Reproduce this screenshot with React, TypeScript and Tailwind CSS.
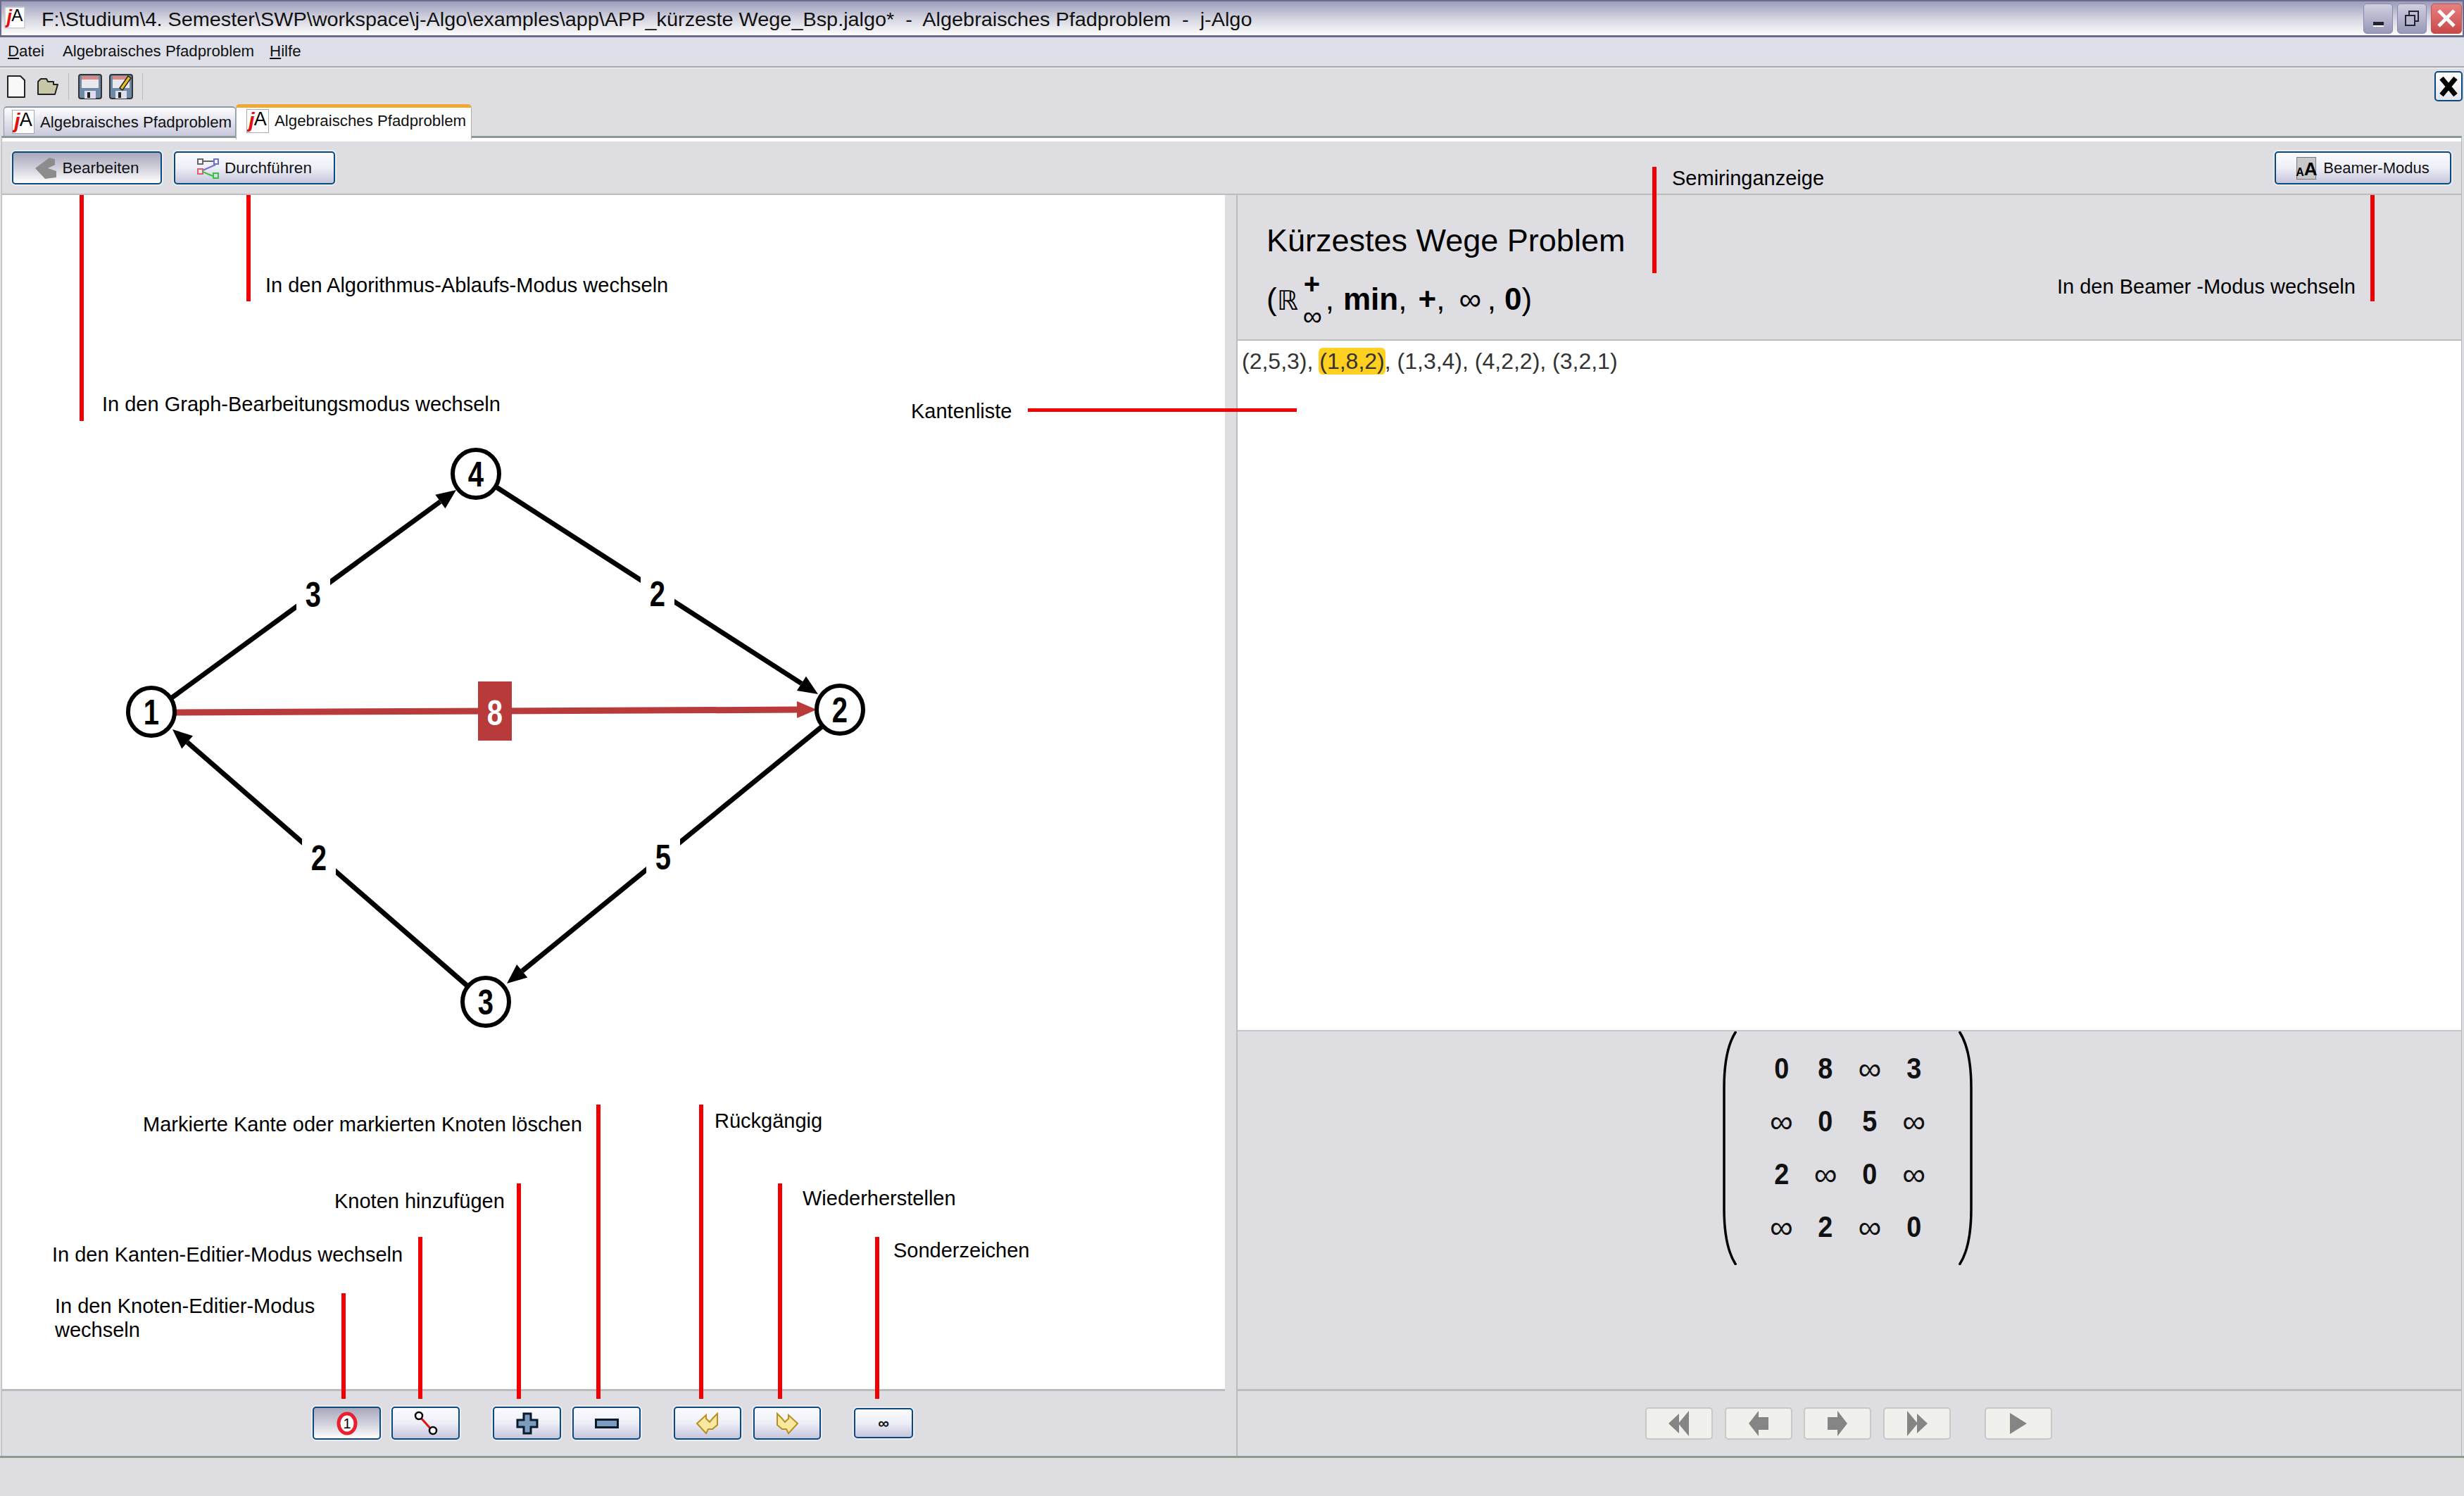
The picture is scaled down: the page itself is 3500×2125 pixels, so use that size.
import React from 'react'

const btn =
  'flex items-center justify-center rounded-[5px] border-2 border-[#0b4a80] bg-gradient-to-b from-[#fbfbff] via-[#eeeef8] to-[#c6c6dc] shadow-[0_0_0_2px_#ededf0]'
const btnDown =
  'flex items-center justify-center rounded-[5px] border-2 border-[#0b4a80] bg-gradient-to-b from-[#a8a8bc] via-[#d0d0dc] to-[#ffffff] shadow-[0_0_0_2px_#ededf0]'
const navBtn =
  'flex h-[46px] w-[96px] items-center justify-center rounded-[5px] border-2 border-[#c8c8c4] bg-[#f0f1ec]'

function JLogo() {
  return (
    <div className="flex h-[34px] w-[32px] items-start justify-center overflow-hidden border border-[#aaa] bg-white leading-none font-bold">
      <span className="text-[30px] text-[#e01010] italic">j</span>
      <span className="-ml-[1px] text-[27px] font-normal text-black">A</span>
    </div>
  )
}

function Arrow({ d, color = '#000', w = 7 }: { d: number[]; color?: string; w?: number }) {
  const [x1, y1, x2, y2] = d
  const len = Math.hypot(x2 - x1, y2 - y1)
  const ux = (x2 - x1) / len
  const uy = (y2 - y1) / len
  const bx = x2 - ux * 28
  const by = y2 - uy * 28
  const pts = `${x2},${y2} ${bx - uy * 12},${by + ux * 12} ${bx + uy * 12},${by - ux * 12}`
  return (
    <g>
      <line x1={x1} y1={y1} x2={bx} y2={by} stroke={color} strokeWidth={w} />
      <polygon points={pts} fill={color} />
    </g>
  )
}

function EdgeLabel({ x, y, t }: { x: number; y: number; t: string }) {
  return (
    <g>
      <rect x={x - 24} y={y - 30} width={48} height={60} fill="#fff" />
      <text
        transform={`translate(${x} ${y + 18}) scale(0.8 1)`}
        textAnchor="middle"
        fontSize="50"
        fontWeight="700"
        fontFamily="Liberation Sans"
      >
        {t}
      </text>
    </g>
  )
}

function Node({ x, y, t }: { x: number; y: number; t: string }) {
  return (
    <g>
      <ellipse cx={x} cy={y} rx={33} ry={34} fill="#fff" stroke="#000" strokeWidth={6} />
      <text
        transform={`translate(${x} ${y + 18}) scale(0.8 1)`}
        textAnchor="middle"
        fontSize="50"
        fontWeight="700"
        fontFamily="Liberation Sans"
      >
        {t}
      </text>
    </g>
  )
}

function Graph() {
  return (
    <svg className="h-full w-full" viewBox="3 275 1737 1696">
      <Arrow d={[240, 992, 648, 694]} />
      <Arrow d={[702, 688, 1162, 984]} />
      <Arrow d={[1170, 1028, 720, 1395]} />
      <Arrow d={[668, 1402, 245, 1034]} />
      <EdgeLabel x={445} y={842} t="3" />
      <EdgeLabel x={934} y={841} t="2" />
      <EdgeLabel x={942} y={1215} t="5" />
      <EdgeLabel x={453} y={1216} t="2" />
      <Arrow d={[248, 1010, 1160, 1006]} color="#b93a3a" w={9} />
      <rect x={679} y={966} width={48} height={84} fill="#b93a3a" />
      <text
        transform="translate(703 1028) scale(0.8 1)"
        textAnchor="middle"
        fontSize="50"
        fontWeight="700"
        fontFamily="Liberation Sans"
        fill="#fff"
      >
        8
      </text>
      <Node x={215} y={1009} t="1" />
      <Node x={1193} y={1006} t="2" />
      <Node x={690} y={1421} t="3" />
      <Node x={676} y={671} t="4" />
    </svg>
  )
}

function Floppy({ pencil }: { pencil?: boolean }) {
  return (
    <svg width="34" height="36" viewBox="0 0 34 36">
      <rect x="1" y="1" width="32" height="34" rx="3" fill="#6f8aa4" stroke="#333" strokeWidth="2" />
      <rect x="5" y="3" width="24" height="5" fill="#d88a8a" />
      <rect x="5" y="8" width="24" height="12" fill="#e8e8ee" />
      <rect x="9" y="24" width="16" height="11" fill="#dde" />
      <rect x="13" y="26" width="4" height="8" fill="#222" />
      {pencil && <path d="M15 20 L27 3 L31 6 L19 23 Z" fill="#e8c020" stroke="#222" strokeWidth="1.5" />}
    </svg>
  )
}

function Header() {
  return (
    <>
      <div className="flex h-[53px] shrink-0 items-center border-t-[2px] border-b-[3px] border-x-[2px] border-[#6a6a8a] bg-gradient-to-b from-[#9c9cbc] via-[#d4d4e0] to-[#fdfdfd] pr-[1px]">
        <div className="ml-[3px] mb-[2px] scale-[0.9]">
          <JLogo />
        </div>
        <span className="mt-[4px] ml-[22px] origin-left scale-x-[1.03] whitespace-pre text-[28px] leading-none text-[#111]">
          {'F:\\Studium\\4. Semester\\SWP\\workspace\\j-Algo\\examples\\app\\APP_kürzeste Wege_Bsp.jalgo*  -  Algebraisches Pfadproblem  -  j-Algo'}
        </span>
        <div className="ml-auto flex gap-[6px]">
          <div className="flex h-[43px] w-[42px] items-end justify-center rounded-[5px] border border-[#8888a8] bg-gradient-to-b from-[#d0d0e0] to-[#9898b8] pb-[9px]">
            <div className="h-[7px] w-[15px] border-b-[2px] border-white bg-[#223]" />
          </div>
          <div className="flex h-[43px] w-[42px] items-center justify-center rounded-[5px] border border-[#8888a8] bg-gradient-to-b from-[#d0d0e0] to-[#9898b8]">
            <svg width="22" height="24" viewBox="0 0 22 24" fill="none" stroke="#223" strokeWidth="2">
              <rect x="7" y="2" width="13" height="14" />
              <rect x="2" y="8" width="13" height="14" fill="#b8b8cc" />
            </svg>
          </div>
          <div className="flex h-[43px] w-[44px] items-center justify-center rounded-[5px] border border-[#c05050] bg-gradient-to-b from-[#e88080] to-[#c84848]">
            <svg width="28" height="28" viewBox="0 0 28 28" stroke="#fff" strokeWidth="5">
              <path d="M3 3 L25 25 M25 3 L3 25" />
            </svg>
          </div>
        </div>
      </div>

      <div className="flex h-[41px] shrink-0 items-center bg-[#dde0e8] pl-[11px] text-[22.25px] leading-none text-[#111]">
        <span>
          <span className="underline">D</span>atei
        </span>
        <span className="ml-[26px]">Algebraisches Pfadproblem</span>
        <span className="ml-[22px]">
          <span className="underline">H</span>ilfe
        </span>
      </div>
      <div className="h-[3px] shrink-0 border-b border-white bg-[#a5a5a8]" />

      <div className="flex h-[51px] shrink-0 items-center pl-[9px] pr-[2px]">
        <svg width="28" height="34" viewBox="0 0 28 34">
          <path d="M2 2 H20 L26 8 V32 H2 Z" fill="#f8f8f8" stroke="#222" strokeWidth="2" strokeLinejoin="round" />
        </svg>
        <svg className="ml-[15px]" width="32" height="26" viewBox="0 0 32 26">
          <path d="M2 24 V6 L6 2 H14 L16 6 H24 V10 H30 L26 24 Z" fill="#c8c8a8" stroke="#222" strokeWidth="2" strokeLinejoin="round" />
        </svg>
        <div className="mx-[13px] h-[38px] w-[1px] bg-[#bbb]" />
        <Floppy />
        <div className="ml-[10px]">
          <Floppy pencil />
        </div>
        <div className="ml-[13px] h-[38px] w-[1px] bg-[#bbb]" />
        <div className="ml-auto flex h-[43px] w-[40px] items-center justify-center rounded-[5px] border-2 border-[#0b4a80] bg-gradient-to-b from-white to-[#e4e4f0]">
          <svg width="30" height="30" viewBox="0 0 30 30" stroke="#000" strokeWidth="7">
            <path d="M5 3 L25 27 M25 3 L5 27" />
          </svg>
        </div>
      </div>

      <div className="relative z-10 flex h-[45px] shrink-0 items-end pl-[5px]">
        <div className="flex h-[42px] w-[330px] items-center gap-[8px] rounded-t-[5px] border-x border-t-2 border-[#8a9aa8] bg-gradient-to-b from-[#fdfdff] to-[#c8c8dc] pl-[11px]">
          <JLogo />
          <span className="mt-[2px] text-[22.25px] text-[#111]">Algebraisches Pfadproblem</span>
        </div>
        <div className="-mb-[5px] flex h-[50px] w-[335px] flex-col rounded-t-[5px] border-x border-[#a8b0a8] border-t-[5px] border-t-[#f0a830] bg-white">
          <div className="flex flex-1 items-center gap-[8px] pb-[8px] pl-[14px]">
            <JLogo />
            <span className="text-[22.25px] text-[#111]">Algebraisches Pfadproblem</span>
          </div>
        </div>
      </div>
    </>
  )
}

function LeftPane() {
  return (
    <div className="flex w-[1737px] shrink-0 flex-col">
      <div className="h-[1696px] bg-white">
        <Graph />
      </div>
      <div className="h-[3px] bg-[#bcbcbc]" />
      <div className="flex flex-1 items-start pt-[22px] pl-[441px]">
        <div className={`h-[47px] w-[97px] ${btnDown}`}>
          <svg width="30" height="34" viewBox="0 0 30 34">
            <ellipse cx="15" cy="17" rx="12" ry="14" fill="#fff" stroke="#e82030" strokeWidth="5" />
            <text x="15" y="24" textAnchor="middle" fontSize="20" fontFamily="Liberation Sans">
              1
            </text>
          </svg>
        </div>
        <div className={`ml-[15px] h-[47px] w-[97px] ${btn}`}>
          <svg width="38" height="36" viewBox="0 0 38 36">
            <line x1="10" y1="8" x2="28" y2="28" stroke="#e01010" strokeWidth="3" />
            <circle cx="9" cy="7" r="5" fill="#fff" stroke="#000" strokeWidth="2.5" />
            <circle cx="29" cy="28" r="5" fill="#fff" stroke="#000" strokeWidth="2.5" />
          </svg>
        </div>
        <div className={`ml-[47px] h-[47px] w-[97px] ${btn}`}>
          <svg width="32" height="32" viewBox="0 0 32 32">
            <path d="M11 2 H21 V11 H30 V21 H21 V30 H11 V21 H2 V11 H11 Z" fill="#7c9cc0" stroke="#0a1a2a" strokeWidth="3" />
          </svg>
        </div>
        <div className={`ml-[16px] h-[47px] w-[97px] ${btn}`}>
          <svg width="34" height="14" viewBox="0 0 34 14">
            <rect x="1.5" y="1.5" width="31" height="11" fill="#7c9cc0" stroke="#0a1a2a" strokeWidth="3" />
          </svg>
        </div>
        <div className={`ml-[47px] h-[47px] w-[96px] ${btn}`}>
          <svg width="34" height="32" viewBox="0 0 34 32">
            <path d="M2 16 L15 4 V9 L20 14 L25 8 L31 2 V18 L24 24 H18 L15 30 Z" fill="#f8e8a0" stroke="#b89020" strokeWidth="2" />
          </svg>
        </div>
        <div className={`ml-[17px] h-[47px] w-[96px] ${btn}`}>
          <svg width="34" height="32" viewBox="0 0 34 32">
            <path d="M32 16 L19 4 V9 L14 14 L9 8 L3 2 V18 L10 24 H16 L19 30 Z" fill="#f8e8a0" stroke="#b89020" strokeWidth="2" />
          </svg>
        </div>
        <div className={`mt-[2px] ml-[47px] h-[43px] w-[84px] ${btn}`}>
          <span className="text-[22px] leading-none font-bold text-[#111]">∞</span>
        </div>
      </div>
    </div>
  )
}

function Cell({ t }: { t: string }) {
  return (
    <div className="flex h-[75px] items-center justify-center">
      <span className={t === '∞' ? 'text-[46px] leading-none text-[#111]' : 'scale-x-[0.9] text-[42px] leading-none font-bold text-[#111]'}>
        {t}
      </span>
    </div>
  )
}

function Bracket({ flip }: { flip?: boolean }) {
  return (
    <svg className={flip ? 'shrink-0 -scale-x-100' : 'shrink-0'} width="21" height="332" viewBox="0 0 21 332">
      <path d="M20 0 C8 18 3 45 3 80 V252 C3 287 8 314 20 332" fill="none" stroke="#000" strokeWidth="3.5" />
    </svg>
  )
}

function RightPane() {
  const cells = ['0', '8', '∞', '3', '∞', '0', '5', '∞', '2', '∞', '0', '∞', '∞', '2', '∞', '0']
  return (
    <div className="flex flex-1 flex-col border-l-2 border-[#bcbcbc]">
      <div className="h-[205px] shrink-0 pl-[41px] text-black">
        <div className="pt-[40px] text-[45px] leading-[50px]">Kürzestes Wege Problem</div>
        <div className="mt-[33px] flex items-baseline text-[44px] leading-[50px]">
          <span>(</span>
          <span className="font-['DejaVu_Sans'] text-[38px] text-black">ℝ</span>
          <span className="relative pl-[39px]">
            ,
            <span className="absolute -top-[22px] left-[8px] text-[40px] font-bold">+</span>
            <span className="absolute top-[24px] left-[7px] text-[38px]">∞</span>
          </span>
          <span className="ml-[13px] font-bold">min</span>
          <span>,</span>
          <span className="ml-[16px] font-bold">+</span>
          <span>,</span>
          <span className="ml-[20px]">∞</span>
          <span className="ml-[9px]">,</span>
          <span className="ml-[12px] font-bold">0</span>
          <span>)</span>
        </div>
      </div>
      <div className="h-[2px] shrink-0 bg-[#bcbcbc]" />
      <div className="h-[979px] shrink-0 bg-white pt-[7px] pl-[6px] text-[32px] leading-[44px] text-[#333]">
        (2,5,3), <span className="-mx-[1px] rounded-[6px] bg-[#ffd020] px-[1px] py-[1px] text-[#333]">(1,8,2)</span>, (1,3,4), (4,2,2), (3,2,1)
      </div>
      <div className="h-[2px] shrink-0 bg-[#c8c8c8]" />
      <div className="flex h-[508px] shrink-0 items-start pl-[688px]">
        <Bracket />
        <div className="ml-[32px] grid w-[251px] shrink-0 grid-cols-4 pt-[15px]">
          {cells.map((c, i) => (
            <Cell key={i} t={c} />
          ))}
        </div>
        <div className="ml-[32px]">
          <Bracket flip />
        </div>
      </div>
      <div className="h-[3px] shrink-0 bg-[#bcbcbc]" />
      <div className="flex flex-1 items-start pt-[23px] pl-[579px]">
        <div className={navBtn}>
          <svg width="30" height="38" viewBox="0 0 30 38" fill="#858585">
            <path d="M0 19 L15 5 V33 Z M14 19 L29 1 V37 Z" />
          </svg>
        </div>
        <div className={`ml-[17px] ${navBtn}`}>
          <svg width="28" height="38" viewBox="0 0 28 38" fill="#858585">
            <path d="M0 19 L14 1 V10 H28 V28 H14 V37 Z" />
          </svg>
        </div>
        <div className={`ml-[16px] ${navBtn}`}>
          <svg width="28" height="38" viewBox="0 0 28 38" fill="#858585">
            <path d="M28 19 L14 1 V10 H0 V28 H14 V37 Z" />
          </svg>
        </div>
        <div className={`ml-[17px] ${navBtn}`}>
          <svg width="30" height="38" viewBox="0 0 30 38" fill="#858585">
            <path d="M30 19 L15 5 V33 Z M16 19 L1 1 V37 Z" />
          </svg>
        </div>
        <div className={`ml-[48px] ${navBtn}`}>
          <svg width="24" height="32" viewBox="0 0 24 32" fill="#858585">
            <path d="M24 16 L0 1 V31 Z" />
          </svg>
        </div>
      </div>
    </div>
  )
}

function Annotations() {
  const label = 'absolute whitespace-nowrap text-[29px] leading-[34px] text-black'
  const line = 'absolute w-[6px] bg-[#f00000]'
  return (
    <>
      <div className={`${line} top-[277px] left-[113px] h-[321px]`} />
      <div className={`${line} top-[277px] left-[350px] h-[151px]`} />
      <div className={`${line} top-[237px] left-[2347px] h-[151px]`} />
      <div className={`${line} top-[277px] left-[3367px] h-[151px]`} />
      <div className="absolute top-[580px] left-[1460px] h-[5px] w-[382px] bg-[#f00000]" />
      <div className={`${line} top-[1837px] left-[485px] h-[150px]`} />
      <div className={`${line} top-[1757px] left-[594px] h-[230px]`} />
      <div className={`${line} top-[1681px] left-[734px] h-[306px]`} />
      <div className={`${line} top-[1569px] left-[847px] h-[418px]`} />
      <div className={`${line} top-[1569px] left-[993px] h-[418px]`} />
      <div className={`${line} top-[1681px] left-[1105px] h-[306px]`} />
      <div className={`${line} top-[1757px] left-[1243px] h-[230px]`} />

      <div className={`${label} top-[388px] left-[377px]`}>In den Algorithmus-Ablaufs-Modus wechseln</div>
      <div className={`${label} top-[557px] left-[145px]`}>In den Graph-Bearbeitungsmodus wechseln</div>
      <div className={`${label} top-[567px] left-[1294px]`}>Kantenliste</div>
      <div className={`${label} top-[236px] left-[2375px]`}>Semiringanzeige</div>
      <div className={`${label} top-[390px] left-[2922px]`}>In den Beamer -Modus wechseln</div>
      <div className={`${label} top-[1580px] left-[203px]`}>Markierte Kante oder markierten Knoten löschen</div>
      <div className={`${label} top-[1689px] left-[475px]`}>Knoten hinzufügen</div>
      <div className={`${label} top-[1765px] left-[74px]`}>In den Kanten-Editier-Modus wechseln</div>
      <div className={`${label} top-[1838px] left-[78px]`}>
        In den Knoten-Editier-Modus
        <br />
        wechseln
      </div>
      <div className={`${label} top-[1575px] left-[1015px]`}>Rückgängig</div>
      <div className={`${label} top-[1685px] left-[1140px]`}>Wiederherstellen</div>
      <div className={`${label} top-[1759px] left-[1269px]`}>Sonderzeichen</div>
    </>
  )
}

export default function App() {
  return (
    <div className="relative flex h-[2125px] w-[3500px] flex-col overflow-hidden bg-[#dddde2] font-['Liberation_Sans',Arial,sans-serif]">
      <Header />

      {/* Main panel */}
      <div className="ml-[2px] mr-[3px] flex h-[1875px] shrink-0 flex-col border-x border-x-[#b0b8b8] border-t-[3px] border-t-[#8a9a9a]">
        <div className="h-[5px] shrink-0 bg-white" />
        <div className="flex h-[74px] shrink-0 items-start justify-between pt-[14px] pr-[14px] pl-[14px]">
          <div className="flex gap-[17px]">
            <div className={`h-[47px] w-[213px] gap-[9px] ${btnDown}`}>
              <svg width="30" height="30" viewBox="0 0 30 30" fill="#8c8c8c">
                <path d="M0 15 L20 0 L28 2 V10 L18 15 L30 19 V28 L14 30 Z" />
              </svg>
              <span className="text-[22.5px] text-[#111]">Bearbeiten</span>
            </div>
            <div className={`h-[47px] w-[229px] gap-[7px] ${btn}`}>
              <svg width="32" height="30" viewBox="0 0 32 30" fill="none" strokeWidth="2">
                <rect x="1" y="2" width="7" height="7" stroke="#666" />
                <path d="M8 5 H24" stroke="#666" />
                <rect x="24" y="2" width="6" height="7" stroke="#7070d0" />
                <path d="M26 10 L8 18" stroke="#7070d0" />
                <rect x="1" y="16" width="7" height="7" stroke="#e06060" />
                <path d="M8 20 L22 26" stroke="#40c040" />
                <rect x="23" y="22" width="7" height="7" stroke="#40c040" />
              </svg>
              <span className="text-[22.5px] text-[#111]">Durchführen</span>
            </div>
          </div>
          <div className={`h-[47px] w-[251px] gap-[10px] ${btn}`}>
            <div className="flex h-[32px] w-[28px] items-end justify-center border border-[#777] bg-[#c8c8c8] pb-[1px] leading-none font-bold text-black">
              <span className="text-[16px]">A</span>
              <span className="text-[26px]">A</span>
            </div>
            <span className="text-[22px] text-[#111]">Beamer-Modus</span>
          </div>
        </div>
        <div className="h-[2px] shrink-0 bg-[#bcbcbc]" />
        <div className="flex flex-1">
          <LeftPane />
          <div className="w-[16px] shrink-0 bg-[#dddde2]" />
          <RightPane />
        </div>
      </div>
      <div className="h-[3px] shrink-0 bg-[#8a9a9a]" />
      <div className="h-[3px] shrink-0 bg-[#e0e0d4]" />

      <Annotations />
    </div>
  )
}
